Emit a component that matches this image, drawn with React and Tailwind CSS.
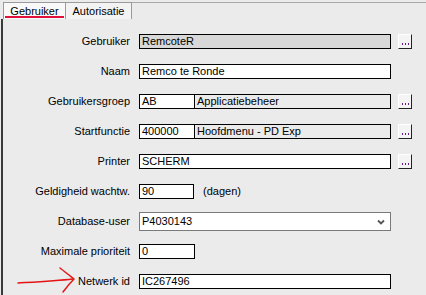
import React from 'react';

const font = { fontFamily: '"Liberation Sans", Arial, sans-serif' };

const DotsButton = () => (
    <div className="ml-[7px] w-[14px] h-[15px] bg-[#f4f4f4] border border-t-[#ffffff] border-l-[#ffffff] border-r-[#222] border-b-[#222] flex items-end justify-center pb-[3px] gap-[1px]">
        <span className="w-[1px] h-[2px] bg-[#6a1a8a]" />
        <span className="w-[1px] h-[2px] bg-[#6a1a8a] mx-[1px]" />
        <span className="w-[1px] h-[2px] bg-[#6a1a8a]" />
    </div>
);

const Field = ({ value, width = 'w-[252px]', bg = 'bg-white', className = '' }) => (
    <div className={`${width} h-[15px] ${bg} border border-black flex items-center pl-[2px] text-[11px] text-black leading-none whitespace-nowrap overflow-hidden ${className}`}>
        {value}
    </div>
);

const Row = ({ label, children }) => (
    <div className="flex items-center h-[15px]">
        <div className="w-[127px] text-right text-[11px] text-black leading-none whitespace-nowrap">{label}</div>
        <div className="ml-[9px] flex items-center">{children}</div>
    </div>
);

export default function App() {
    return (
        <div className="w-[426px] h-[295px] bg-[#ebebeb] relative overflow-hidden" style={font}>
            {/* Tabs */}
            <div className="flex h-[19px] items-end">
                <div className="w-[3px] h-[17px]" />
                <div className="relative w-[62px] h-[17px] bg-[#f9f9f9] border-l border-t border-[#9a9a9a] flex items-center justify-center text-[11px] text-black">
                    Gebruiker
                    <div className="absolute left-[1px] right-[1px] bottom-[1px] h-[2px] bg-[#e0103a]" />
                </div>
                <div className="w-[67px] h-[17px] bg-[#f3f3f3] border-t border-r border-l border-[#9a9a9a] flex items-center justify-center text-[11px] text-black">
                    Autorisatie
                </div>
                <div className="flex-1 h-[17px] border-t border-[#a8a8a8]" />
            </div>

            {/* Panel */}
            <div className="h-[276px] ml-[1px] border-l-2 border-[#3a3a3a] pt-[15px] flex flex-col gap-[15px]">
                <Row label="Gebruiker">
                    <Field value="RemcoteR" bg="bg-[#d8d8d8]" />
                    <DotsButton />
                </Row>
                <Row label="Naam">
                    <Field value="Remco te Ronde" />
                </Row>
                <Row label="Gebruikersgroep">
                    <Field value="AB" width="w-[56px]" />
                    <Field value="Applicatiebeheer" width="w-[197px]" bg="bg-[#ebebeb]" className="-ml-[1px]" />
                    <DotsButton />
                </Row>
                <Row label="Startfunctie">
                    <Field value="400000" width="w-[56px]" />
                    <Field value="Hoofdmenu - PD Exp" width="w-[197px]" bg="bg-[#ebebeb]" className="-ml-[1px]" />
                    <DotsButton />
                </Row>
                <Row label="Printer">
                    <Field value="SCHERM" />
                    <DotsButton />
                </Row>
                <Row label="Geldigheid wachtw.">
                    <Field value="90" width="w-[55px]" />
                    <span className="ml-[9px] text-[11px] text-black leading-none">(dagen)</span>
                </Row>
                <Row label="Database-user">
                    <div className="w-[252px] h-[19px] bg-white border border-[#7a7a7a] flex items-center justify-between pl-[2px] pr-[5px] text-[11px] text-black leading-none">
                        <span>P4030143</span>
                        <svg width="8" height="6" viewBox="0 0 8 6">
                            <path d="M1 1.5 L4 4.5 L7 1.5" fill="none" stroke="#555" strokeWidth="1.8" />
                        </svg>
                    </div>
                </Row>
                <Row label="Maximale prioriteit">
                    <Field value="0" width="w-[56px]" />
                </Row>
                <Row label="Netwerk id">
                    <Field value="IC267496" />
                </Row>
            </div>

            {/* Red annotation arrow */}
            <svg className="absolute left-0 top-0" width="426" height="295" viewBox="0 0 426 295">
                <path d="M18 283 C35 282 55 281 73 279" fill="none" stroke="#e51414" strokeWidth="1.5" strokeLinecap="round" />
                <path d="M60 268 C64 271 70 276 74 279 C70 283 66 288 63 292" fill="none" stroke="#e51414" strokeWidth="1.5" strokeLinecap="round" strokeLinejoin="round" />
            </svg>
        </div>
    );
}
